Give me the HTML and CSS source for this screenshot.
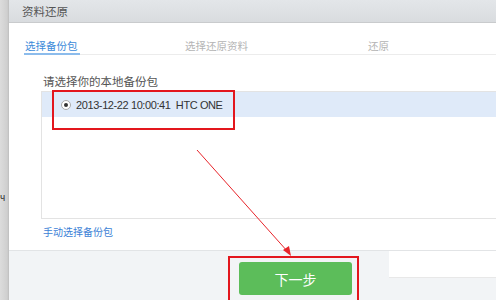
FILE: index.html
```html
<!DOCTYPE html>
<html lang="zh-CN">
<head>
  <meta charset="UTF-8" />
  <title>资料还原</title>
  <link rel="stylesheet" href="styles.css">
</head>
<body>
  <div class="page">
    <div class="side">
      <span class="side-glyph">ч</span>
    </div>

    <div class="dialog">
      <div class="header">资料还原</div>

      <div class="content">
        <div class="tabs">
          <div class="tab tab-first active">选择备份包</div>
          <div class="tab tab-second">选择还原资料</div>
          <div class="tab">还原</div>
        </div>

        <div class="picker">
          <div class="label">请选择你的本地备份包</div>
          <div class="list">
            <div class="row selected">
              <span class="radio"><span class="radio-dot"></span></span>
              <span class="row-text">2013-12-22 10:00:41&nbsp;&nbsp;HTC ONE</span>
            </div>
          </div>
          <a class="manual" href="#">手动选择备份包</a>
        </div>
      </div>

      <div class="footer">
        <button class="next">下一步</button>
        <div class="footer-patch"></div>
      </div>
    </div>

    <div class="edge"></div>
  </div>

  <!-- annotations drawn over the screenshot -->
  <div class="mark mark-row"></div>
  <div class="mark mark-button"></div>
  <svg class="arrow" width="500" height="300" viewBox="0 0 500 300">
    <line x1="197" y1="150" x2="288" y2="252" stroke="#e8242a" stroke-width="1" />
    <path d="M291 256 L283 250 L289 246 Z" fill="#e8242a" />
  </svg>
</body>
</html>
```

FILE: styles.css
```css
body {
  margin: 0;
  width: 500px;
  height: 300px;
  overflow: hidden;
  background-color: #fff;
  font-family: "Liberation Sans", "Noto Sans CJK SC", sans-serif;
  position: relative;
}

.page {
  display: flex;
  height: 300px;
}

.side {
  width: 9px;
  background: linear-gradient(to right, #dcdcdc, #cfcfcf 80%, #bdbdbd);
  position: relative;
}

.side-glyph {
  position: absolute;
  left: 0;
  top: 192px;
  font-size: 10px;
  color: #333;
}

.edge {
  width: 4px;
  background-color: #fff;
}

.dialog {
  width: 487px;
  display: flex;
  flex-direction: column;
  background-color: #fff;
}

.header {
  height: 22px;
  line-height: 24px;
  padding-left: 13px;
  font-size: 11.5px;
  color: #555;
  background: linear-gradient(#e3e6e9, #d9dcdf);
  border-bottom: 1px solid #c9cbcd;
}

.content {
  flex: 1;
}

.tabs {
  display: flex;
  margin: 16px 0 0 16px;
  border-bottom: 1px solid #ececec;
}

.tab {
  font-size: 10.5px;
  color: #b4b4b4;
  height: 15px;
  line-height: 14px;
}

.tab-first {
  width: 160px;
}

.tab-second {
  width: 183px;
}

.tab.active {
  color: #3b8ad9;
  position: relative;
}

.tab.active::after {
  content: "";
  position: absolute;
  left: -1px;
  bottom: -1px;
  width: 56px;
  height: 2px;
  background-color: #8cbcec;
}

.picker {
  margin-left: 32px;
  padding-top: 18px;
}

.label {
  font-size: 11.5px;
  color: #555;
  padding-left: 2px;
  height: 18px;
}

.list {
  height: 126px;
  border: 1px solid #e3e3e3;
  border-right: none;
}

.row {
  height: 25px;
  display: flex;
  align-items: center;
  padding-left: 19px;
}

.row.selected {
  background-color: #dfeaf9;
}

.radio {
  width: 8px;
  height: 8px;
  border: 1px solid #aaa;
  border-radius: 50%;
  background-color: #fff;
  display: flex;
  justify-content: center;
  align-items: center;
  margin-right: 5px;
}

.radio-dot {
  width: 4px;
  height: 4px;
  border-radius: 50%;
  background-color: #333;
}

.row-text {
  font-size: 11px;
  letter-spacing: -0.4px;
  color: #333;
}

.manual {
  display: block;
  margin-top: 5px;
  padding-left: 2px;
  font-size: 10px;
  color: #3c7fd6;
  text-decoration: none;
}

.footer {
  height: 49px;
  border-top: 1px solid #e2e4e6;
  background-color: #f2f4f6;
  display: flex;
  align-items: flex-start;
  padding-left: 230px;
}

.next {
  margin-top: 11px;
  width: 113px;
  height: 33px;
  border: none;
  border-radius: 3px;
  background-color: #5cbd5a;
  color: #fff;
  font-family: "Noto Sans CJK SC", sans-serif;
  font-size: 14px;
  padding: 0;
}

.footer-patch {
  margin-left: 37px;
  flex: 1;
  height: 26px;
  background-color: #fff;
  border-bottom: 1px solid #e8e8e8;
}

.mark {
  position: absolute;
  border: 2px solid #e3161d;
}

.mark-row {
  left: 52px;
  top: 90px;
  width: 179px;
  height: 36px;
}

.mark-button {
  left: 228px;
  top: 256px;
  width: 127px;
  height: 50px;
}

.arrow {
  position: absolute;
  left: 0;
  top: 0;
  pointer-events: none;
}
```
